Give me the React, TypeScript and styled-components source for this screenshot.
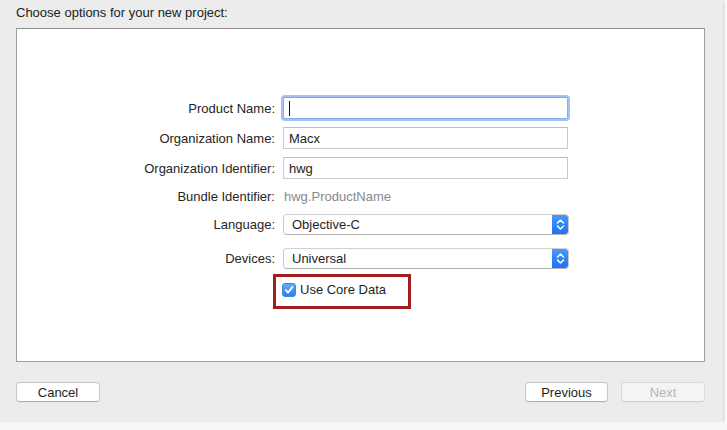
import React from "react";
import styled, { createGlobalStyle } from "styled-components";

const Global = createGlobalStyle`
  html, body { margin: 0; padding: 0; background: #f7f7f7; }
  * { box-sizing: border-box; }
  body { font-family: "Liberation Sans", Arial, sans-serif; font-size: 13px; color: #222; }
`;

const Window = styled.div`
  width: 723px;
  height: 422px;
  background: #ececec;
  box-shadow: 0 1px 3px rgba(0, 0, 0, 0.28);
  padding: 0 18px 0 16px;
  display: flex;
  flex-direction: column;
`;

const Title = styled.div`
  height: 28px;
  padding-top: 5px;
  line-height: 16px;
  font-size: 13px;
  color: #222;
`;

const Panel = styled.div`
  height: 334px;
  background: #fff;
  border: 1px solid #9e9e9e;
  border-top-color: #8e8e8e;
  padding-top: 68px;
  display: flex;
  flex-direction: column;
`;

const Row = styled.div<{ $mt?: number; $h: number }>`
  display: flex;
  align-items: center;
  height: ${(p) => p.$h}px;
  margin-top: ${(p) => p.$mt ?? 0}px;
`;

const Label = styled.div`
  width: 258px;
  margin-right: 8px;
  text-align: right;
  font-size: 13px;
  color: #252525;
  white-space: nowrap;
`;

const Field = styled.div<{ $focus?: boolean }>`
  width: 285px;
  height: 22px;
  background: #fff;
  border: 1px solid ${(p) => (p.$focus ? "#85aee8" : "#cbcbcb")};
  border-top-color: ${(p) => (p.$focus ? "#7aa6e6" : "#bdbdbd")};
  box-shadow: ${(p) => (p.$focus ? "0 0 0 2px #a3c4f2" : "none")};
  border-radius: ${(p) => (p.$focus ? "2px" : "0")};
  display: flex;
  align-items: center;
  padding-left: 5px;
  font-size: 13px;
  color: #1e1e1e;
`;

const Caret = styled.span`
  display: block;
  width: 1px;
  height: 15px;
  background: #111;
`;

const Plain = styled.div`
  padding-left: 1px;
  color: #888;
  font-size: 13px;
`;

const Popup = styled.div`
  width: 286px;
  height: 21px;
  background: #fff;
  border: 1px solid #c8c8c8;
  border-top-color: #d0d0d0;
  border-bottom-color: #b4b4b4;
  border-radius: 4px;
  display: flex;
  align-items: center;
  justify-content: space-between;
  padding-left: 8px;
  font-size: 13px;
  color: #1e1e1e;
  overflow: hidden;
`;

const Stepper = styled.div`
  width: 17px;
  height: 21px;
  margin: -1px -1px -1px 0;
  border-radius: 0 4px 4px 0;
  background: linear-gradient(#4a9bf8, #1d6ff0);
  display: flex;
  align-items: center;
  justify-content: center;
`;

const Annotation = styled.div`
  margin-left: -10px;
  border: 3px solid #a21e1e;
  padding: 6px 22px 10px 6px;
  display: flex;
  align-items: center;
  height: 35px;
  align-self: flex-start;
`;

const Check = styled.div`
  width: 14px;
  height: 14px;
  border-radius: 3px;
  background: linear-gradient(#64a9fa, #2b7ff2);
  border: 1px solid #3a82e6;
  display: flex;
  align-items: center;
  justify-content: center;
  margin-right: 4px;
`;

const CheckText = styled.span`
  font-size: 13px;
  color: #1e1e1e;
  line-height: 14px;
`;

const Footer = styled.div`
  margin-top: 20px;
  display: flex;
  align-items: center;
`;

const Spacer = styled.div`
  flex: 1;
`;

const Button = styled.div<{ $w: number; $disabled?: boolean; $ml?: number }>`
  width: ${(p) => p.$w}px;
  height: 20px;
  margin-left: ${(p) => p.$ml ?? 0}px;
  border-radius: 4px;
  background: ${(p) => (p.$disabled ? "#f4f4f4" : "#fff")};
  border: 1px solid ${(p) => (p.$disabled ? "#dadada" : "#c6c6c6")};
  border-bottom-color: ${(p) => (p.$disabled ? "#d2d2d2" : "#b0b0b0")};
  box-shadow: 0 0.5px 0.5px rgba(0, 0, 0, 0.06);
  display: flex;
  align-items: center;
  justify-content: center;
  font-size: 13px;
  color: ${(p) => (p.$disabled ? "#b4b4b4" : "#1e1e1e")};
`;

const StepIcon = () => (
  <svg width="9" height="13" viewBox="0 0 9 13">
    <path d="M1.5 5 L4.5 2 L7.5 5" fill="none" stroke="#fff" strokeWidth="1.5" strokeLinecap="round" strokeLinejoin="round" />
    <path d="M1.5 8 L4.5 11 L7.5 8" fill="none" stroke="#fff" strokeWidth="1.5" strokeLinecap="round" strokeLinejoin="round" />
  </svg>
);

const CheckIcon = () => (
  <svg width="10" height="10" viewBox="0 0 10 10">
    <path d="M1.8 5.2 L4 7.6 L8.4 2" fill="none" stroke="#fff" strokeWidth="1.8" strokeLinecap="round" strokeLinejoin="round" />
  </svg>
);

export default function App() {
  return (
    <>
      <Global />
      <Window>
        <Title>Choose options for your new project:</Title>
        <Panel>
          <Row $h={22}>
            <Label>Product Name:</Label>
            <Field $focus>
              <Caret />
            </Field>
          </Row>
          <Row $h={22} $mt={8}>
            <Label>Organization Name:</Label>
            <Field>Macx</Field>
          </Row>
          <Row $h={22} $mt={8}>
            <Label>Organization Identifier:</Label>
            <Field>hwg</Field>
          </Row>
          <Row $h={18} $mt={8}>
            <Label>Bundle Identifier:</Label>
            <Plain>hwg.ProductName</Plain>
          </Row>
          <Row $h={21} $mt={9}>
            <Label>Language:</Label>
            <Popup>
              <span>Objective-C</span>
              <Stepper>
                <StepIcon />
              </Stepper>
            </Popup>
          </Row>
          <Row $h={21} $mt={13}>
            <Label>Devices:</Label>
            <Popup>
              <span>Universal</span>
              <Stepper>
                <StepIcon />
              </Stepper>
            </Popup>
          </Row>
          <Row $h={35} $mt={5}>
            <Label />
            <Annotation>
              <Check>
                <CheckIcon />
              </Check>
              <CheckText>Use Core Data</CheckText>
            </Annotation>
          </Row>
        </Panel>
        <Footer>
          <Button $w={84}>Cancel</Button>
          <Spacer />
          <Button $w={83}>Previous</Button>
          <Button $w={84} $ml={13} $disabled>
            Next
          </Button>
        </Footer>
      </Window>
    </>
  );
}
